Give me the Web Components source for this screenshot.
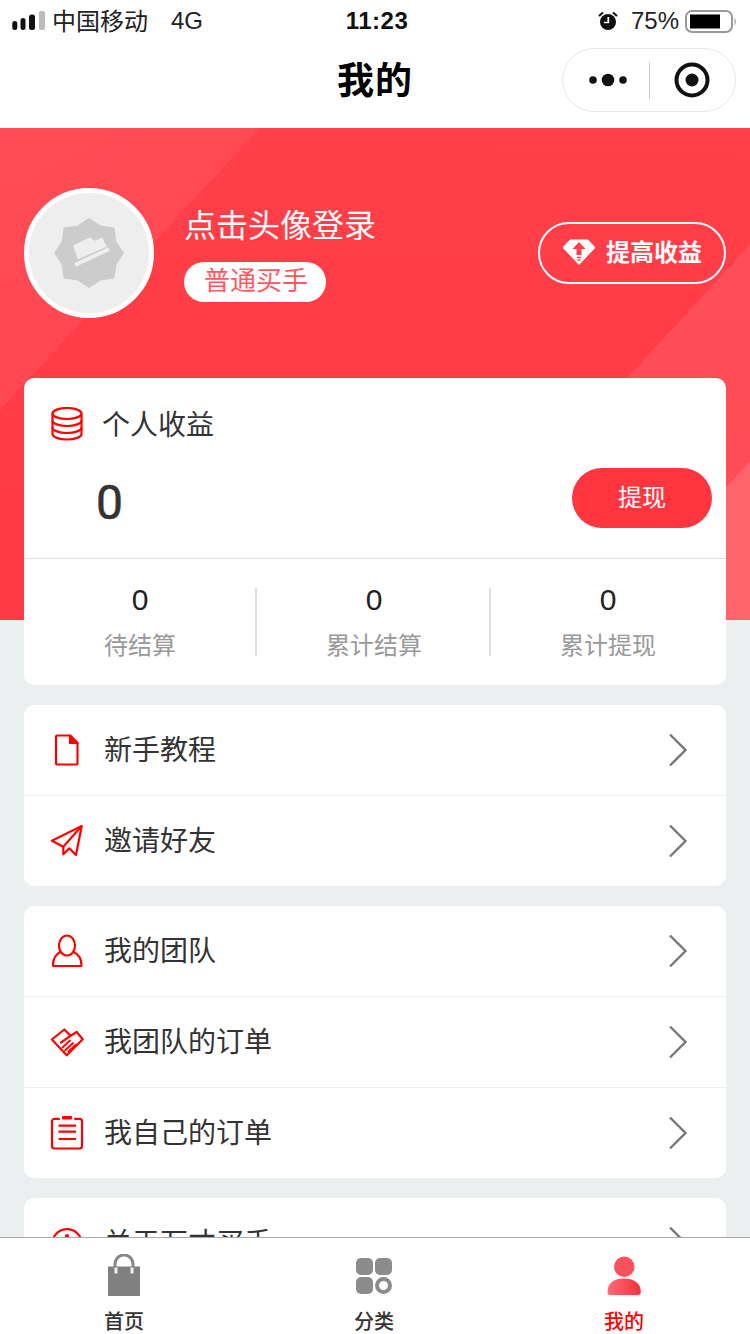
<!DOCTYPE html>
<html lang="zh">
<head>
<meta charset="utf-8">
<title>我的</title>
<style>
  html, body { margin: 0; padding: 0; background: #ebeff0; }
  body { font-family: "Liberation Sans", "Noto Sans CJK SC", sans-serif; color: #333; }
</style>
</head>
<body>
<app-page>
  <status-bar></status-bar>
  <nav-bar>我的</nav-bar>
  <page-scroll>
    <profile-hero>
      <earnings-card></earnings-card>
    </profile-hero>
    <menu-card>
      <menu-row icon="file">新手教程</menu-row>
      <menu-row icon="plane">邀请好友</menu-row>
    </menu-card>
    <menu-card>
      <menu-row icon="person">我的团队</menu-row>
      <menu-row icon="shake">我团队的订单</menu-row>
      <menu-row icon="clip">我自己的订单</menu-row>
    </menu-card>
    <menu-card>
      <menu-row icon="info">关于万才买手</menu-row>
    </menu-card>
  </page-scroll>
  <tab-bar>
    <tab-item icon="bag">首页</tab-item>
    <tab-item icon="grid">分类</tab-item>
    <tab-item icon="me" active>我的</tab-item>
  </tab-bar>
</app-page>

<script>
const RED = "#f00";
const ICONS = {
  file: `<svg width="34" height="34" viewBox="0 0 34 34" fill="none" stroke="${RED}" stroke-width="2.2" stroke-linejoin="round">
    <path d="M8 2.500H20L27.500 10V30.500a1 1 0 0 1-1 1H7a1 1 0 0 1-1-1V3.500a1 1 0 0 1 1-1Z"/>
    <path d="M20 2.500 27.500 10H20Z" fill="${RED}"/></svg>`,
  plane: `<svg width="34" height="34" viewBox="0 0 34 34" fill="none" stroke="${RED}" stroke-width="2.2" stroke-linejoin="round">
    <path d="M31.700 2 1.900 16.700 13.300 22.700V30.300L19.300 24.300 26 31Z"/>
    <path d="M31.700 2 13.300 22.700"/></svg>`,
  person: `<svg width="34" height="34" viewBox="0 0 34 34" fill="none" stroke="${RED}" stroke-width="2.200" stroke-linejoin="round">
    <ellipse cx="17" cy="11.500" rx="8" ry="10"/>
    <path d="M10.500 18C6 20 3 25 3 31.500a.5.5 0 0 0 .5.5H31a.5.5 0 0 0 .5-.5C31.500 25 28 20 23.500 18"/></svg>`,
  shake: `<svg width="34" height="34" viewBox="0 0 34 34" fill="none" stroke="${RED}" stroke-width="2.200" stroke-linejoin="round" stroke-linecap="round">
    <path d="M1.900 14.500 14.300 4.500 20.500 10.800 26.700 7 32.700 14.300 16.700 30.300Z"/>
    <path d="M20.500 10.800 11 17.500"/>
    <path d="M12.500 22.500 20 15.500M15 25.500 23 18M18.500 26.500 26 19.500" stroke-width="1.800"/></svg>`,
  clip: `<svg width="34" height="34" viewBox="0 0 34 34" fill="none" stroke="${RED}" stroke-width="2.200" stroke-linecap="round" stroke-linejoin="round">
    <path d="M9 2.800H4.500a2.500 2.500 0 0 0-2.500 2.500V30a2.500 2.500 0 0 0 2.500 2.500H29.500A2.500 2.500 0 0 0 32 30V5.300A2.500 2.500 0 0 0 29.500 2.800H25"/>
    <rect x="12" y="0" width="10" height="3.500" rx="1" fill="${RED}" stroke="none"/>
    <path d="M8.500 9.700H26M8.500 15.700H26M8.500 23H26" stroke-linecap="butt"/></svg>`,
  info: `<svg width="34" height="34" viewBox="0 0 34 34" fill="none" stroke="${RED}" stroke-width="2.200">
    <circle cx="17" cy="18" r="14.800"/><circle cx="17" cy="10" r="2" fill="${RED}" stroke="none"/><path d="M17 15V26"/></svg>`,
  bag: `<svg width="34" height="44" viewBox="0 0 34 44">
    <path d="M8 14V10a9 9 0 0 1 18 0V14" fill="none" stroke="#888" stroke-width="3"/>
    <rect x="1" y="12.500" width="32" height="29.500" fill="#808080"/>
    <rect x="7.500" y="13.500" width="3" height="6" fill="#eee"/><rect x="23.500" y="13.500" width="3" height="6" fill="#eee"/></svg>`,
  grid: `<svg width="38" height="41" viewBox="0 0 38 41" fill="#8c8c8c">
    <rect x="1" y="1" width="17" height="17" rx="5"/><rect x="20" y="1" width="17" height="17" rx="5"/>
    <rect x="1" y="20" width="17" height="17" rx="5"/><circle cx="28.500" cy="28.500" r="6.500" fill="none" stroke="#8c8c8c" stroke-width="4"/></svg>`,
  me: `<svg width="36" height="44" viewBox="0 0 36 44">
    <defs><linearGradient id="g" x1="0" x2="1" y1="0" y2="0"><stop offset="0" stop-color="#ff6b73"/><stop offset="1" stop-color="#f5303e"/></linearGradient></defs>
    <circle cx="18.300" cy="12.700" r="10.200" fill="#f9525c"/>
    <path d="M1.500 38C1.500 29 8 24.500 18 24.500S34.800 29 34.800 38C34.800 40 33.500 41 32 41H4C2.500 41 1.500 40 1.500 38Z" fill="url(#g)"/></svg>`
};

function define(name, css, html, setup) {
  customElements.define(name, class extends HTMLElement {
    constructor() {
      super();
      this.attachShadow({ mode: "open" });
    }
    connectedCallback() {
      const body = typeof html === "function" ? html(this) : html;
      this.shadowRoot.innerHTML = `<style>${css}</style>${body}`;
      if (setup) setup(this);
    }
  });
}

define("app-page", `
  :host { display: flex; flex-direction: column; width: 750px; height: 1334px; overflow: hidden; }
`, `<slot></slot>`);

define("status-bar", `
  :host { display: flex; align-items: center; height: 40px; padding-top: 1px; box-sizing: border-box; background: #fff; color: #111; font-size: 24px; position: relative; flex: none; }
  .left { display: flex; align-items: center; margin-left: 12px; }
  .carrier { margin-left: 6px; color: #222; padding-bottom: 2px; }
  .net { margin-left: 23px; color: #222; }
  .time { position: absolute; left: 0; right: -4px; text-align: center; font-weight: 700; letter-spacing: .5px; pointer-events: none; }
  .right { margin-left: auto; display: flex; align-items: center; margin-right: 13px; }
  .pct { margin-left: 13px; color: #222; }
  .bat { margin-left: 6px; }
  svg { display: block; }
`, `
  <div class="left">
    <svg width="34" height="22" viewBox="0 0 34 22">
      <rect x=".3" y="11" width="5" height="9" rx="2.500" fill="#111"/>
      <rect x="8.500" y="8" width="5" height="12" rx="2.500" fill="#111"/>
      <rect x="17" y="4.500" width="6" height="15.500" rx="2.500" fill="#111"/>
      <rect x="27" y="1" width="6" height="19" rx="2" fill="#bbb"/>
    </svg>
    <span class="carrier">中国移动</span><span class="net">4G</span>
  </div>
  <div class="time">11:23</div>
  <div class="right">
    <svg width="20" height="20" viewBox="0 0 20 20">
      <circle cx="10" cy="11" r="8" fill="#111"/>
      <path d="M10.300 6V11.500H6" fill="none" stroke="#fff" stroke-width="1.700"/>
      <path d="M1 5 5 1.500M19 5 15 1.500" stroke="#111" stroke-width="2"/>
    </svg>
    <span class="pct">75%</span>
    <svg class="bat" width="52" height="24" viewBox="0 0 52 24">
      <rect x="1" y="2" width="46" height="21" rx="6" fill="none" stroke="#999" stroke-width="2"/>
      <rect x="5" y="5.500" width="30" height="14" fill="#000"/>
      <path d="M49.500 8.500 Q52 12.500 49.500 17Z" fill="#999"/>
    </svg>
  </div>
`);

define("nav-bar", `
  :host { display: flex; align-items: center; justify-content: center; height: 88px; box-sizing: border-box; padding-bottom: 12px; background: #fff; color: #000; font-size: 37px; letter-spacing: 1px; font-weight: 700; position: relative; flex: none; }
  .cap { position: absolute; right: 14px; top: 8px; width: 172px; height: 62px; border: 1px solid #e8e8e8; border-radius: 32px; display: flex; align-items: center; }
  .more { width: 86px; display: flex; justify-content: center; padding-left: 4px; box-sizing: border-box; }
  .sep { width: 1px; height: 37px; background: #ccc; }
  .tgt { flex: 1; display: flex; justify-content: center; padding-right: 2px; }
  svg { display: block; }
`, `
  <slot></slot>
  <div class="cap">
    <div class="more">
      <svg width="38" height="14" viewBox="0 0 38 14" fill="#111"><circle cx="4" cy="7" r="3.800"/><circle cx="19" cy="7" r="6.300"/><circle cx="34" cy="7" r="3.800"/></svg>
    </div>
    <div class="sep"></div>
    <div class="tgt">
      <svg width="36" height="36" viewBox="0 0 36 36"><circle cx="18" cy="18" r="15.500" fill="none" stroke="#111" stroke-width="4"/><circle cx="18" cy="18" r="6.500" fill="#111"/></svg>
    </div>
  </div>
`);

define("page-scroll", `
  :host { display: block; flex: 1; min-height: 0; overflow: hidden; }
`, `<slot></slot>`);

define("profile-hero", `
  :host {
    display: block; height: 492px; box-sizing: border-box; padding: 60px 24px 0; margin-bottom: 85px;
    background:
      linear-gradient(132.600deg, rgba(255,255,255,.07) 0, rgba(255,255,255,.06) 191px, transparent 191px),
      linear-gradient(132.600deg, transparent 631px, rgba(255,255,255,.09) 631px, rgba(255,255,255,.09) 778px, rgba(255,255,255,.21) 778px),
      linear-gradient(180deg, #ff3f49, #ff3a45);
  }
  .top { display: flex; align-items: center; height: 130px; margin-bottom: 60px; }
  .avatar { width: 130px; height: 130px; box-sizing: border-box; border: 5px solid #fff; border-radius: 50%; background: #eee; display: flex; align-items: center; justify-content: center; flex: none; }
  .info { margin-left: 30px; display: flex; flex-direction: column; align-items: flex-start; }
  .name { font-size: 32px; line-height: 44px; color: #fff; }
  .tag { margin-top: 14px; height: 40px; line-height: 39px; padding: 0 20px; border-radius: 20px; background: #fff; color: #ff5960; font-size: 26px; box-sizing: border-box; width: 142px; white-space: nowrap; }
  .up { margin-left: auto; width: 188px; height: 62px; box-sizing: border-box; border: 2px solid #fff; border-radius: 31px; display: flex; align-items: center; color: #fff; font-size: 24px; font-weight: 700; }
  .up svg { margin-left: 23px; margin-right: 11px; position: relative; top: 1px; }
  .up span { padding-bottom: 5px; }
  .below { display: block; margin-bottom: -65px; }
  svg { display: block; flex: none; }
`, `
  <div class="top">
    <div class="avatar">
      <svg width="70" height="70" viewBox="0 0 70 70">
        <polygon fill="#ccc" stroke="#ccc" stroke-width="1.500" stroke-linejoin="round" points="35,1 46.100,8.200 59.700,10.300 61.800,23.900 69,35 61.800,46.100 59.700,59.700 46.100,61.800 35,69 23.900,61.800 10.300,59.700 8.200,46.100 1,35 8.200,23.900 10.300,10.300 23.900,8.200"/>
        <path d="M20 28 36 20.300 41 23.700 47.700 20.300 52 28 24.300 40.300Z" fill="#eee" stroke="#eee" stroke-width="1.500" stroke-linejoin="round"/>
        <path d="M21 47 55 31" stroke="#eee" stroke-width="4"/>
      </svg>
    </div>
    <div class="info">
      <div class="name">点击头像登录</div>
      <div class="tag">普通买手</div>
    </div>
    <div class="up">
      <svg width="32" height="30" viewBox="0 0 32 30">
        <path d="M7 1H25L32 8.500 16 25.500 0 8.500Z" fill="#fff" stroke="#fff" stroke-width="1" stroke-linejoin="round"/>
        <path d="M16 3 22.500 10H18.500V16H13.500V10H9.500Z" fill="#ff404a"/>
        <path d="M13.800 18.500H18.200M14.500 21H17.500" stroke="#ff404a" stroke-width="1.500"/>
      </svg>
      <span>提高收益</span>
    </div>
  </div>
  <div class="below"><slot></slot></div>
`);

define("earnings-card", `
  :host { display: block; background: #fff; border-radius: 10px; }
  .head { display: flex; align-items: center; height: 40px; padding: 26px 0 0 26px; font-size: 28px; color: #333; }
  .head svg { margin-right: 18px; }
  .head span { padding-bottom: 2px; }
  .amount { display: flex; align-items: flex-start; justify-content: space-between; margin-top: 24px; padding: 0 14px 30px 72px; border-bottom: 1px solid #ddd; }
  .num { font-family: Roboto, "Liberation Sans", sans-serif; font-weight: 400; -webkit-text-stroke: .6px #333; font-size: 48px; color: #333; height: 60px; line-height: 70px; }
  .btn { width: 140px; height: 60px; line-height: 59px; text-align: center; border-radius: 30px; background: #ff3640; color: #fff; font-size: 24px; }
  .stats { display: flex; padding: 29px 0; margin-left: -1px; }
  .stat { width: 234px; height: 68px; box-sizing: border-box; padding-left: 2px; border-right: 2px solid #ddd; display: flex; flex-direction: column; justify-content: space-between; align-items: center; }
  .stat:last-child { border-right-color: transparent; }
  .v { font-size: 30px; line-height: 24px; color: #222; }
  .l { font-size: 24px; line-height: 24px; color: #999; position: relative; top: 2px; }
  svg { display: block; flex: none; }
`, `
  <div class="head">
    <svg width="34" height="34" viewBox="0 0 34 34" fill="none" stroke="${RED}" stroke-width="2.200">
      <ellipse cx="17" cy="6.500" rx="14.500" ry="5.500"/>
      <path d="M2.500 6.500V27C2.500 30 9 32.500 17 32.500S31.500 30 31.500 27V6.500"/>
      <path d="M2.500 13.500C2.500 16.500 9 19 17 19S31.500 16.500 31.500 13.500M2.500 20.500C2.500 23.500 9 26 17 26S31.500 23.500 31.500 20.500"/>
    </svg>
    <span>个人收益</span>
  </div>
  <div class="amount"><span class="num">0</span><span class="btn">提现</span></div>
  <div class="stats">
    <div class="stat"><span class="v">0</span><span class="l">待结算</span></div>
    <div class="stat"><span class="v">0</span><span class="l">累计结算</span></div>
    <div class="stat"><span class="v">0</span><span class="l">累计提现</span></div>
  </div>
`);

define("menu-card", `
  :host { display: block; margin: 0 24px 20px; background: #fff; border-radius: 10px; overflow: hidden; }
`, `<slot></slot>`);

define("menu-row", `
  :host { display: flex; align-items: center; height: 90px; padding: 0 38px 0 26px; font-size: 28px; color: #333; }
  :host(:not(:last-child)) { border-bottom: 1px solid #eee; }
  .ic { width: 34px; height: 34px; margin-right: 20px; flex: none; }
  .text { flex: 1; padding-bottom: 4px; }
  svg { display: block; flex: none; }
`, el => `
  <div class="ic">${ICONS[el.getAttribute("icon")]}</div>
  <span class="text"><slot></slot></span>
  <svg width="20" height="34" viewBox="0 0 20 34" fill="none" stroke="#777" stroke-width="2.400"><path d="M2 1.500 17.500 17 2 32.500"/></svg>
`);

define("tab-bar", `
  :host { display: flex; height: 96px; flex: none; background: #fff; border-top: 1px solid #aaa; box-sizing: content-box; }
`, `<slot></slot>`);

define("tab-item", `
  :host { display: flex; flex-direction: column; align-items: center; flex: 1; font-size: 20px; font-weight: 500; color: #333; position: relative; left: -1px; }
  :host([active]) { color: ${RED}; }
  .ic { height: 60px; display: flex; align-items: flex-end; }
  .lb { line-height: 24px; margin-top: 12px; }
  svg { display: block; }
`, el => `
  <div class="ic">${ICONS[el.getAttribute("icon")]}</div>
  <span class="lb"><slot></slot></span>
`);
</script>
</body>
</html>
